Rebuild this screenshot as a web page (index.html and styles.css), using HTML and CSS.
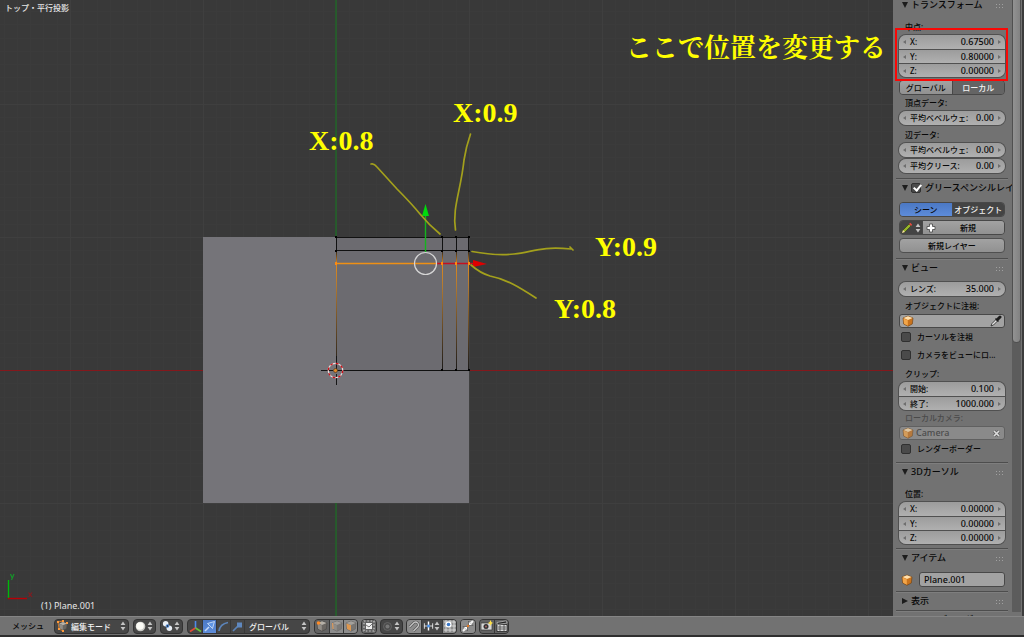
FILE: index.html
```html
<!DOCTYPE html>
<html lang="ja">
<head>
<meta charset="utf-8">
<title>Plane.001</title>
<link rel="stylesheet" href="styles.css">
</head>
<body>
<svg class="defs" aria-hidden="true">
  <symbol id="updown" viewBox="0 0 6 10"><path d="M3 0.5 5.4 4H.6zM3 9.5 5.4 6H.6z" fill="#c4c4c4"/></symbol>
  <symbol id="cube" viewBox="0 0 12 12"><path d="M6 1 11 3 10.300 9 6 11.300 1.700 9 1 3z" fill="#c9731d" stroke="#6b4013" stroke-width=".6"/><path d="M6 1.300 10.500 3 6 5 1.500 3z" fill="#ffe0ae"/><path d="M1.500 3.400 5.800 5.200V10.800L2 8.700z" fill="#f2a548"/></symbol>
  <symbol id="graycube" viewBox="0 0 12 12"><path d="M6 1 11 3 10.300 9 6 11.300 1.700 9 1 3z" fill="#6a6662" stroke="#484644" stroke-width=".6"/><path d="M6 1.300 10.500 3 6 5 1.500 3z" fill="#b5b0a8"/><path d="M1.500 3.400 5.800 5.200V10.800L2 8.700z" fill="#918c86"/></symbol>
</svg>
<div class="app">
  <div class="work">
    <main class="viewport">
      <svg class="scene" aria-hidden="true">
        <defs>
          <linearGradient id="fade" gradientUnits="userSpaceOnUse" x1="0" y1="250" x2="0" y2="370">
            <stop offset="0" stop-color="#1c1a18"/><stop offset=".11" stop-color="#e08a1c"/><stop offset=".3" stop-color="#b27a31"/><stop offset="1" stop-color="#1b1a1a"/>
          </linearGradient>
        </defs>
        <path d="M336 0V617" stroke="#1d6b24" stroke-width="1.300"/>
        <line x1="0" y1="370.500" x2="100%" y2="370.500" stroke="#84181c"/>
        <path d="M203 237H469V503H203z" fill="#757479"/>
        <path d="M336 237H469V370H336z" fill="#6c6b70"/>
        <path d="M336 237.500H469M336 250.500H469M336 370.500H469M336.500 237V251M442.500 237V251M456.500 237V251M468.500 237V251" stroke="#111" fill="none"/>
        <path d="M336 251h1V370h-1zM442 251h1V370h-1zM456 251h1V370h-1zM468 251h1V370h-1z" fill="url(#fade)"/>
        <path d="M336 263.500H437" stroke="#ee9014" stroke-width="1.400"/>
        <path d="M437 263.500H474" stroke="#c41020" stroke-width="1.400"/>
        <path d="M473 260 487 264 473 267z" fill="#e00000"/>
        <path d="M425.500 252V214" stroke="#14b41e" stroke-width="1.400"/>
        <path d="M425.500 204 429 216H422z" fill="#00dc0c"/>
        <circle cx="425.500" cy="263.500" r="11" fill="none" stroke="#d5d5d5" stroke-width="1.200"/>
        <path d="M335 236h2v2h-2zM441 236h2v2h-2zM455 236h2v2h-2zM468 236h2v2h-2zM335 250h2v2h-2zM441 250h2v2h-2zM455 250h2v2h-2zM468 250h2v2h-2zM441 369h2v2h-2zM455 369h2v2h-2zM468 369h2v2h-2z" fill="#000"/>
        <path d="M335 262h2v3h-2zM441 262h2v3h-2zM455 262h2v3h-2zM468 262h2v3h-2z" fill="#ff8a10"/>
        <path d="M321 370.500H333M339 370.500H350M336.500 356V367M336.500 374V385" stroke="#161616"/>
        <circle cx="335.500" cy="370.500" r="7.200" fill="none" stroke="#e8e0e0" stroke-width="1.200"/>
        <circle cx="335.500" cy="370.500" r="7.200" fill="none" stroke="#d01018" stroke-width="1.300" stroke-dasharray="2.830 2.830"/>
        <circle cx="335.500" cy="370.500" r="2" fill="#e08a28" stroke="#4a2e10" stroke-width=".6"/>
        <g fill="none" stroke="#a3a01c" stroke-width="1.700" stroke-linecap="round" stroke-linejoin="round">
          <path d="M371 164Q374 163 377 167L397 189Q411 203 420 214 429 225 440 234"/>
          <path d="M470.500 134Q466 147 464 160C461 190 452 208 455.500 230"/>
          <path d="M472 251.500Q496 256 514 254C533 252 540 246 571 249M570 247 573 250"/>
          <path d="M471 265Q480 273 490 276C506 279 519 287 536 298"/>
        </g>
        <path d="M8.500 598V580" stroke="#00b80a" stroke-width="1.400"/>
        <path d="M8 598.500H27" stroke="#b80006" stroke-width="1.400"/>
        <path d="M10.500 574 12.200 578M14 574 11.500 580" stroke="#16942a" fill="none" stroke-width="1.200"/>
        <path d="M28.500 592.500 32 597M32 592.500 28.500 597" stroke="#851a20" fill="none" stroke-width="1.200"/>
      </svg>
      <p class="view-name">トップ・平行投影</p>
      <p class="object-name">(1) Plane.001</p>
      <p class="note note-title">ここで位置を変更する</p>
      <p class="note note-x8">X:0.8</p>
      <p class="note note-x9">X:0.9</p>
      <p class="note note-y9">Y:0.9</p>
      <p class="note note-y8">Y:0.8</p>
    </main>

    <aside class="sidebar">
      <div class="panels">
        <section class="panel first roomy">
          <h2 class="title"><i class="tri"></i>トランスフォーム<i class="grip"></i></h2>
          <div class="body">
            <p class="caption">中点:</p>
            <div class="stack marked">
              <div class="field"><label for="mx">X:</label><input id="mx" value="0.67500"></div>
              <div class="field"><label for="my">Y:</label><input id="my" value="0.80000"></div>
              <div class="field"><label for="mz">Z:</label><input id="mz" value="0.00000"></div>
            </div>
            <div class="segments mt3"><button class="light">グローバル</button><button class="pressed">ローカル</button></div>
            <p class="caption">頂点データ:</p>
            <div class="stack"><div class="field"><label for="vb">平均ベベルウェ:</label><input id="vb" value="0.00"></div></div>
            <p class="caption mt2">辺データ:</p>
            <div class="stack"><div class="field"><label for="eb">平均ベベルウェ:</label><input id="eb" value="0.00"></div></div>
            <div class="stack mt2"><div class="field"><label for="ec">平均クリース:</label><input id="ec" value="0.00"></div></div>
          </div>
        </section>

        <section class="panel roomy">
          <h2 class="title"><i class="tri"></i><input type="checkbox" class="tick" id="gp" checked><label for="gp">グリースペンシルレイヤー</label></h2>
          <div class="body">
            <div class="segments"><button class="blue">シーン</button><button class="dark">オブジェクト</button></div>
            <div class="segments mt3">
              <button class="dark pencil" aria-label="ペンシル"><svg width="12" height="12" viewBox="0 0 12 12"><path d="M1 11 2 8 8 2 10 4 4 10z" fill="#96b52a" stroke="#2d3412" stroke-width=".6"/><path d="M8 2 9.300.8 11.200 2.700 10 4z" fill="#e64a3e"/><path d="M1 11 2 8 4 10z" fill="#f6dfa9"/></svg><svg width="6" height="10"><use href="#updown"/></svg></button>
              <button class="light add"><svg width="10" height="10" viewBox="0 0 10 10"><path d="M3.500 1h3v2.500H9v3H6.500V9h-3V6.500H1v-3h2.500z" fill="#fff" stroke="#444" stroke-width=".8"/></svg><span>新規</span></button>
            </div>
            <button class="wide light mt3">新規レイヤー</button>
          </div>
        </section>

        <section class="panel">
          <h2 class="title"><i class="tri"></i>ビュー<i class="grip"></i></h2>
          <div class="body">
            <div class="stack"><div class="field"><label for="lens">レンズ:</label><input id="lens" value="35.000"></div></div>
            <label class="caption mt2" for="lock">オブジェクトに注視:</label>
            <div class="pick"><svg width="12" height="12"><use href="#cube"/></svg><input id="lock" value=""><svg width="12" height="12" viewBox="0 0 12 12"><path d="M1 11 2 8.500 6 4.500 7.500 6 3.500 10z" fill="#e4e4e4" stroke="#222" stroke-width=".8"/><path d="M5.500 3.500 8.500 6.500M7 5 10 2" stroke="#1c1c1c" stroke-width="1.600"/><path d="M8 4 10 2" stroke="#1c1c1c" stroke-width="3" stroke-linecap="round"/></svg></div>
            <div class="check"><input type="checkbox" class="tick" id="cur"><label for="cur">カーソルを注視</label></div>
            <div class="check"><input type="checkbox" class="tick" id="cam"><label for="cam">カメラをビューにロ...</label></div>
            <p class="caption mt2">クリップ:</p>
            <div class="stack">
              <div class="field"><label for="cs">開始:</label><input id="cs" value="0.100"></div>
              <div class="field"><label for="ce">終了:</label><input id="ce" value="1000.000"></div>
            </div>
            <label class="caption dim" for="lc">ローカルカメラ:</label>
            <div class="pick off"><svg width="12" height="12"><use href="#cube"/></svg><input id="lc" value="Camera" disabled><svg width="9" height="9" viewBox="0 0 9 9"><path d="M2 2 7 7M7 2 2 7" stroke="#444" stroke-width="3"/><path d="M2 2 7 7M7 2 2 7" stroke="#fff" stroke-width="1.700"/></svg></div>
            <div class="check"><input type="checkbox" class="tick" id="rb"><label for="rb">レンダーボーダー</label></div>
          </div>
        </section>

        <section class="panel">
          <h2 class="title"><i class="tri"></i>3Dカーソル<i class="grip"></i></h2>
          <div class="body">
            <p class="caption">位置:</p>
            <div class="stack">
              <div class="field"><label for="px">X:</label><input id="px" value="0.00000"></div>
              <div class="field"><label for="py">Y:</label><input id="py" value="0.00000"></div>
              <div class="field"><label for="pz">Z:</label><input id="pz" value="0.00000"></div>
            </div>
          </div>
        </section>

        <section class="panel">
          <h2 class="title"><i class="tri"></i>アイテム<i class="grip"></i></h2>
          <div class="body item"><svg width="12" height="12"><use href="#cube"/></svg><input class="name" aria-label="名前" value="Plane.001"></div>
        </section>

        <section class="panel"><h2 class="title"><i class="tri closed"></i>表示<i class="grip"></i></h2></section>
        <section class="panel"><h2 class="title"><i class="tri"></i>シェーディング<i class="grip"></i></h2></section>
      </div>
      <div class="scroll"><div class="thumb"></div></div>
    </aside>
  </div>

  <footer class="bar">
    <button class="menu">メッシュ</button>
    <div class="group">
      <div class="drop mode">
        <svg width="12" height="12" viewBox="0 0 12 12"><use href="#graycube" x="1" y="1" width="10" height="10"/><path d="M1 2 6 1M1 2 2 9 6 11" stroke="#e8842a" fill="none" stroke-width=".8"/><path d="M0 1h2v2H0zM5 0h2v2H5zM1 8h2v2H1zM5 10h2v2H5zM9 2h2v2H9z" fill="#ff9a3c"/></svg>
        <select aria-label="モード"><option>編集モード</option></select><svg width="6" height="10"><use href="#updown"/></svg>
      </div>
    </div>
    <div class="group"><button class="duo" aria-label="シェーディング"><svg width="11" height="11" viewBox="0 0 11 11"><circle cx="5.500" cy="5.500" r="4.800" fill="#c9c9c5"/><circle cx="5" cy="5" r="3.800" fill="#fbfbf6"/></svg><svg width="6" height="10"><use href="#updown"/></svg></button></div>
    <div class="group"><button class="duo" aria-label="ピボット"><svg width="11" height="12" viewBox="0 0 12 12"><circle cx="4" cy="3.500" r="3" fill="#e9eef4"/><circle cx="8" cy="8.500" r="3" fill="#e9eef4"/><circle cx="6" cy="6" r="2" fill="#4e86cf"/><circle cx="6" cy="6" r=".7" fill="#111"/></svg><svg width="6" height="10"><use href="#updown"/></svg></button></div>
    <div class="group">
      <button aria-label="マニピュレーター"><svg width="13" height="13" viewBox="0 0 13 13" fill="none" stroke-width="1.600"><path d="M6.500 8V1" stroke="#4f8bea"/><path d="M6.500 8 1 11.500" stroke="#e24a35"/><path d="M6.500 8 12 11.500" stroke="#6bc436"/></svg></button>
      <button class="blue" aria-label="移動"><svg width="13" height="13" viewBox="0 0 13 13"><path d="M2 11 6 7" stroke="#c3d8f8" stroke-width="1.600"/><path d="M4.500 3.500 11.500 1.500 9.500 8.500z" fill="#5e94e4" stroke="#dbe8fb" stroke-width=".8"/></svg></button>
      <button aria-label="回転"><svg width="13" height="13" viewBox="0 0 13 13"><path d="M2 11Q3 4 11 2.500" stroke="#5b83b8" stroke-width="1.700" fill="none"/></svg></button>
      <button aria-label="拡大縮小"><svg width="13" height="13" viewBox="0 0 13 13"><path d="M2 11 7 6" stroke="#5b83b8" stroke-width="1.700"/><path d="M6 2.500h5v5H6z" fill="#5f88bf"/></svg></button>
      <div class="drop space"><select aria-label="座標系"><option>グローバル</option></select><svg width="6" height="10"><use href="#updown"/></svg></div>
    </div>
    <div class="tools">
      <div class="group">
        <button class="on0" aria-label="頂点選択"><svg width="12" height="12" viewBox="0 0 12 12"><use href="#graycube" width="12" height="12"/><circle cx="2.500" cy="3" r="1.800" fill="#ff8c28"/></svg></button>
        <button class="soft" aria-label="辺選択"><svg width="12" height="12" viewBox="0 0 12 12"><use href="#graycube" width="12" height="12" opacity=".5"/><path d="M1.500 3 2 9" stroke="#dc9a5c" stroke-width="1.200"/></svg></button>
        <button class="soft" aria-label="面選択"><svg width="12" height="12" viewBox="0 0 12 12"><use href="#graycube" width="12" height="12" opacity=".6"/><path d="M1.500 3.400 6 5.200V11L2 9z" fill="#dd974f"/></svg></button>
      </div>
      <div class="group"><button class="on0" aria-label="陰面処理"><svg width="12" height="12" viewBox="0 0 12 12"><path d="M3 3h6v6H3z" fill="#eee"/><path d="M1 1h10v10H1z" fill="none" stroke="#ccc" stroke-width="1.200" stroke-dasharray="1.500 1.833"/><path d="M3 5 6 7 9 4" stroke="#777" fill="none"/></svg></button></div>
      <div class="group"><button class="duo" aria-label="プロポーショナル編集"><svg width="11" height="11" viewBox="0 0 11 11"><circle cx="5.500" cy="5.500" r="4" fill="#4c4c4c" stroke="#656565"/><circle cx="5.500" cy="5.500" r="2" fill="#777"/></svg><svg width="6" height="10"><use href="#updown"/></svg></button></div>
      <div class="group">
        <button class="soft" aria-label="スナップ"><svg width="12" height="12" viewBox="0 0 12 12"><path d="M1.500 7 6 2.500A2.900 2.900 0 0 1 10 6.500L5.500 11" fill="none" stroke="#555" stroke-width="2.600"/><path d="M1.500 7 6 2.500A2.900 2.900 0 0 1 10 6.500L5.500 11" fill="none" stroke="#c5c5c5" stroke-width="1.300"/></svg></button>
        <button class="duo" aria-label="スナップ要素"><svg width="11" height="12" viewBox="0 0 12 12"><path d="M1 6H11M1.500 3V9M10.500 3V9" stroke="#e2e2e2"/><path d="M6 1V11" stroke="#fff" stroke-width="1.600"/><circle cx="6" cy="6" r="1.700" fill="#4a8fe4"/></svg><svg width="6" height="10"><use href="#updown"/></svg></button>
        <button class="soft" aria-label="グリッドにスナップ"><svg width="12" height="12" viewBox="0 0 12 12"><path d="M2 0V12M6 0V12M10 0V12M0 2H12M0 6H12M0 10H12" stroke="#e4e4e4" stroke-width=".8"/><circle cx="4.500" cy="4.500" r="3" fill="#fff"/><circle cx="4.500" cy="4.500" r="1.800" fill="#3a78c8"/></svg></button>
      </div>
      <div class="group"><button class="soft" aria-label="自動マージ"><svg width="12" height="12" viewBox="0 0 12 12"><path d="M6.500 5.500V1L11 5.500zM5.500 6.500V11L1 6.500z" fill="#fff" stroke="#4a4a4a" stroke-width=".7"/><path d="M8.500 3.500 11 1M3.500 8.500 1 11" stroke="#f3f3f3" stroke-width="2"/><circle cx="6" cy="6" r="1.200" fill="#e47b27"/></svg></button></div>
      <div class="group">
        <button class="on0" aria-label="レンダー"><svg width="12" height="12" viewBox="0 0 12 12"><path d="M0 3h11v7H0z" fill="#d6d6d6" stroke="#333" stroke-width=".7"/><circle cx="5" cy="6.500" r="2.500" fill="#333"/><circle cx="5" cy="6.500" r="1" fill="#a66"/><path d="M9.500 0 10.300 2 12 3 10.300 4 9.500 6 8.700 4 7 3 8.700 2z" fill="#ffe14a"/></svg></button>
        <button class="on0" aria-label="アニメーション"><svg width="12" height="12" viewBox="0 0 12 12"><path d="M1 4.500h10v7H1z" fill="#dcdcdc" stroke="#222" stroke-width=".8"/><path d="M1 2.500 10.500.8 11 3 1.300 4.500z" fill="#222" stroke="#ddd" stroke-width=".6"/><path d="M2 7h8M2 9h8M4 5V11M8 5V11" stroke="#444" stroke-width=".8"/></svg></button>
      </div>
    </div>
  </footer>
</div>
</body>
</html>
```
FILE: styles.css
```css
* { box-sizing: border-box; }
html, body { height: 100%; }
body {
  margin: 0;
  background: #2e2e2e;
  color: #080808;
  font: 500 8px/16px "Noto Sans", "Noto Sans CJK JP", sans-serif;
}
p, h2 { margin: 0; font-size: inherit; font-weight: inherit; }
button, input, select {
  margin: 0; padding: 0; border: 0; background: none;
  color: inherit; font: inherit; border-radius: 0; appearance: none;
  min-width: 0;
}
svg { flex: none; display: block; }
.defs { position: absolute; width: 0; height: 0; }

.app { display: flex; flex-direction: column; height: 100vh; padding-bottom: 2px; }
.work { display: flex; flex: 1; min-height: 0; }

/* 3D view */
.viewport {
  position: relative; flex: 1; min-width: 0; overflow: hidden;
  background-color: #393939;
  background-image:
    linear-gradient(90deg, #3f3f3f 1px, transparent 1px),
    linear-gradient(#3f3f3f 1px, transparent 1px),
    repeating-linear-gradient(90deg, #3b3b3b 0 1px, transparent 1px 13.300px),
    repeating-linear-gradient(#3b3b3b 0 1px, transparent 1px 13.300px);
  background-size: 133px 133px;
  background-position: 70px 104px;
}
.scene { position: absolute; inset: 0; width: 100%; height: 100%; }
.view-name, .object-name { position: absolute; color: #e6e6e6; white-space: nowrap; }
.view-name { left: 5px; top: 0; }
.object-name { left: 41px; bottom: 2px; font-size: 9px; font-weight: 400; }
.note {
  position: absolute; color: #ff0; white-space: nowrap;
  font: bold 28px/32px "Liberation Serif", "Noto Sans CJK JP", serif;
}
.note-title { left: 626px; top: 30px; font: 700 26px/32px "Noto Serif CJK JP", "Noto Sans CJK JP", serif; }
.note-x8 { left: 309px; top: 125px; }
.note-x9 { left: 453px; top: 97px; }
.note-y9 { left: 595px; top: 231px; }
.note-y8 { left: 554px; top: 293px; }

/* Properties region */
.sidebar { display: flex; width: 131px; background: #727272; border-right: 2px solid #3c3c3c; }
.panels { flex: 1; min-width: 0; padding: 0 4px 0 3px; overflow: hidden; }
.panel { border-top: 1px solid #4d4d4d; box-shadow: inset 0 1px #7e7e7e; padding-bottom: 4px; }
.panel.roomy { padding-bottom: 5px; }
.panel.first { margin-top: -5px; }
.panel:nth-last-child(-n+2) { padding-bottom: 0; }
.title {
  position: relative; display: flex; align-items: center; gap: 3px;
  height: 18px; padding-left: 6px; font-size: 9px; line-height: 10px; white-space: nowrap;
}
.tri { border: 3px solid transparent; border-top: 6px solid #1c1c1c; border-bottom: 0; }
.tri.closed { border: 3px solid transparent; border-left: 6px solid #1c1c1c; border-right: 0; }
.grip {
  position: absolute; right: 4px; top: 7px; width: 9px; height: 5px;
  background: radial-gradient(circle, #a0a0a0 0 1px, transparent 1px) 0 0 / 3px 3px;
}
.body { padding: 5px 3px 0; }
.mt2 { margin-top: 2px; }
.mt3 { margin-top: 3px; }
.caption { display: block; height: 16px; padding-left: 6px; white-space: nowrap; }
.dim { color: #4a4a4a; }

.stack { position: relative; border-radius: 7px; box-shadow: 0 0 0 1px #505050; }
.field {
  display: flex; align-items: center; height: 14px; padding: 0 11px; position: relative;
  background: linear-gradient(#9c9c9c, #b0b0b0);
}
.field + .field { border-top: 1px solid #505050; }
.field:first-child { border-top-left-radius: 7px; border-top-right-radius: 7px; }
.field:last-child { border-bottom-left-radius: 7px; border-bottom-right-radius: 7px; }
.field::before, .field::after { content: ""; position: absolute; top: 5px; border: 2px solid transparent; }
.field::before { left: 4px; border-right: 3px solid #6e6e6e; border-left: 0; }
.field::after { right: 4px; border-left: 3px solid #6e6e6e; border-right: 0; }
.field label { flex: none; line-height: 14px; white-space: nowrap; }
.field input { flex: 1; width: 0; height: 13px; font-size: 9px; text-align: right; }
.marked::after { content: ""; position: absolute; inset: -7px -3px -4px -4px; border: 2px solid #fa0806; }

.segments { display: flex; height: 15px; border-radius: 4px; overflow: hidden; border: 1px solid #484848; line-height: 13px; }
.segments button { flex: 1; }
.segments button + button { border-left: 1px solid #484848; }
.light { background: linear-gradient(#a2a2a2, #919191); }
.pressed { background: #646464; color: #f2f2f2; }
.dark { background: #444; color: #f0f0f0; }
.blue { background: linear-gradient(#4b78c4, #5d8cda); }
.segments .pencil { flex: 0 0 22px; display: flex; align-items: center; justify-content: space-around; }
.segments .add { display: flex; align-items: center; padding-left: 3px; }
.add span { flex: 1; padding-right: 4px; text-align: center; }
.wide { display: block; width: 100%; height: 15px; line-height: 13px; border: 1px solid #505050; border-radius: 4px; }

.pick { display: flex; align-items: center; height: 14px; padding: 0 2px; border: 1px solid #484848; border-radius: 3px; background: #a2a2a2; }
.pick input { flex: 1; width: 0; height: 12px; padding-left: 2px; font-size: 9px; }
.pick.off { background: #8a8a8a; border-color: #606060; color: #4c4c4c; padding-right: 3px; }
.off svg { opacity: .7; }
.check { display: flex; align-items: center; gap: 6px; height: 18px; padding-left: 2px; white-space: nowrap; }
.tick { flex: none; width: 10px; height: 10px; border: 1px solid #303030; border-radius: 2px; background: #4a4a4a; }
.title .tick { position: relative; margin-right: 1px; }
.tick:checked::after {
  content: ""; position: absolute; left: 3px; top: -1px; width: 3px; height: 6px;
  border: solid #fff; border-width: 0 2px 2px 0; transform: rotate(40deg);
}
.item { display: flex; align-items: center; gap: 6px; padding-left: 5px; }
.name { flex: 1; height: 15px; padding-left: 4px; font-size: 9px; border: 1px solid #484848; border-radius: 3px; background: #a2a2a2; }

.scroll {
  width: 10px; padding: 0 1px 4px 0; border-radius: 5px;
  background: linear-gradient(#5c5c5c, #5c5c5c) 0 0 / 9px calc(100% - 4px) no-repeat;
}
.thumb { width: 9px; height: 56%; border: 1px solid #505050; border-top: 0; border-radius: 0 0 5px 5px; background: linear-gradient(90deg, #929292, #828282); }

/* Header strip */
.bar { display: flex; align-items: center; gap: 4px; height: 19px; padding-left: 6px; background: #727272; border-top: 1px solid #858585; }
.menu { width: 44px; text-align: center; }
.tools { display: flex; gap: 3px; }
.group { display: flex; height: 15px; border: 1px solid #333; border-radius: 4px; overflow: hidden; background: #464646; color: #f2f2f2; }
.group button { display: flex; align-items: center; justify-content: center; width: 14px; }
.group button + button, .group button + .drop { border-left: 1px solid #383838; }
.group .duo { width: 21px; justify-content: space-between; padding: 0 2px 0 1px; }
.group .soft { background: #8c8c8c; }
.group .on0 { background: #626262; }
.drop { display: flex; align-items: center; padding: 0 2px; }
.drop select { flex: 1; width: 0; padding-left: 2px; line-height: 13px; }
.mode { width: 73px; }
.space { width: 65px; }
```
